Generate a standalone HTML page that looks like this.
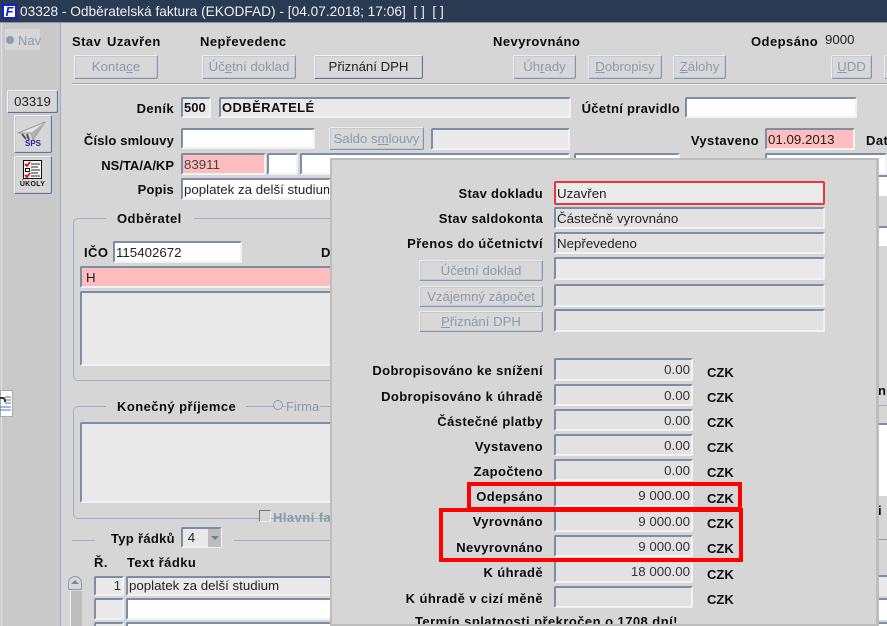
<!DOCTYPE html>
<html><head><meta charset="utf-8"><style>
html,body{margin:0;padding:0}
#p{position:relative;width:887px;height:626px;overflow:hidden;background:#d6d6d6;font:13px/16px "Liberation Sans",sans-serif;color:#111;filter:blur(.25px)}
#p div,#p span.a,#p svg{position:absolute}
.l{font-weight:bold;white-space:nowrap;letter-spacing:.4px;text-align:right;color:#0c0c0c;height:16px;margin-top:1px}
.t{font-weight:bold;white-space:nowrap;letter-spacing:.45px;height:16px;margin-top:1px;color:#0c0c0c}
.f{box-sizing:border-box;border:2px solid;border-color:#7c8da6 #f2f2f2 #f2f2f2 #7c8da6;border-radius:2px;background:#e9e9e9;padding:1px 0 0 1px;white-space:nowrap;overflow:hidden;font-size:13.3px;color:#222}
.w{background:#fff}.pk{background:#ffbdbd}.g{background:#e2e2e2}
.b{box-sizing:border-box;border:1px solid;border-color:#eee #8394ac #8394ac #eee;border-radius:2px;background:#d8d8d8;text-align:center;color:#8c99ad;white-space:nowrap;box-shadow:0 0 0 1px #c4cad3 inset;font-size:13.2px}
.e{color:#222;border-color:#f3f3f3 #5f7595 #5f7595 #f3f3f3}
.v{text-align:right;padding:1px 1px 0 0;color:#333}
.c{font-weight:bold;font-size:13px;color:#0c0c0c;height:16px;margin-top:1px}
.r{border:4px solid #f00;box-sizing:border-box}
u{text-decoration:underline}
</style></head><body><div id="p">

<div style="left:0;top:0;width:887px;height:22px;background:#293a52"></div>
<div style="left:0;top:22px;width:887px;height:1px;background:#8a97a8"></div>
<div style="left:2px;top:4px;width:15px;height:15px;background:#fff;border:2px solid #1420c8;box-sizing:border-box;color:#1420c8;font:italic bold 13px/11px 'Liberation Sans',sans-serif;text-align:center;overflow:hidden">F</div>
<div style="left:20px;top:4px;color:#eef1f5;font-size:13.7px;white-space:nowrap">03328 - Odběratelská faktura (EKODFAD) - [04.07.2018; 17:06]&nbsp; [ ]&nbsp; [ ]</div>

<!-- sidebar -->
<div style="left:0;top:23px;width:60px;height:603px;background:#c9c9c9"></div>
<div style="left:60px;top:23px;width:1px;height:603px;background:#9dabc0"></div>
<div style="left:1px;top:23px;width:1px;height:603px;background:#e4e4e4"></div>
<div style="left:5px;top:29px;width:35px;height:21px;background:#d6d6d6"></div>
<div style="left:5px;top:35px;width:10px;height:10px;border-radius:50%;background:#8e9baf;box-shadow:0 0 0 1px #d9dde3 inset"></div>
<div style="left:18px;top:33px;color:#8c99ad">Nav</div>
<div class="b e" style="left:7px;top:90px;width:51px;height:23px;line-height:21px;background:#d6d6d6">03319</div>
<div class="b e" style="left:14px;top:115px;width:38px;height:38px;background:#d6d6d6"></div>
<svg style="left:17px;top:119px" width="32" height="32" viewBox="0 0 32 32"><path d="M1 14 L28 3 L16 21 L14 14 Z" fill="#e4e4e4" stroke="#8a8a8a" stroke-width=".8"/><path d="M14 14 L28 3 L16 21 Z" fill="#b0b0b0"/><path d="M5 15 L9 20 M10 15 L12 21" stroke="#555" stroke-width="2"/><text x="16" y="27" font-family="Liberation Sans" font-size="8" font-weight="bold" fill="#1a2a9c" text-anchor="middle">SPS</text></svg>
<div class="b e" style="left:14px;top:156px;width:38px;height:38px;background:#d6d6d6"></div>
<svg style="left:18px;top:160px" width="30" height="30" viewBox="0 0 30 30"><rect x="5.5" y=".5" width="18" height="18" fill="#f4f4f4" stroke="#111"/><path d="M7 4l2 2 3-4M7 15l2 2 3-4" stroke="#d00" stroke-width="1.6" fill="none"/><rect x="7.5" y="8.5" width="4" height="3" fill="#fff" stroke="#111"/><path d="M13 4h9M13 7h7M13 10h9M13 13h7M13 16h9" stroke="#333"/><text x="14.5" y="26" font-family="Liberation Sans" font-size="7" font-weight="bold" fill="#111" text-anchor="middle" letter-spacing=".3">ÚKOLY</text></svg>
<div style="left:0;top:390px;width:13px;height:27px;background:#fff;border:1px solid #aaa;box-sizing:border-box"></div>
<svg style="left:0;top:392px" width="12" height="22" viewBox="0 0 12 22"><path d="M5 5h6M5 8h6M5 11h6M0 15h11M0 18h11" stroke="#4a7ab8"/><path d="M0 6h3q2 0 2 4" stroke="#333" stroke-width="2" fill="none"/></svg>

<!-- top row -->
<div class="t" style="left:72px;top:33px">Stav</div>
<div class="t" style="left:107px;top:33px">Uzavřen</div>
<div class="t" style="left:200px;top:33px">Nepřevedenc</div>
<div class="t" style="left:493px;top:33px">Nevyrovnáno</div>
<div class="t" style="left:751px;top:33px">Odepsáno</div>
<div style="left:825px;top:32px;color:#222;font-size:13.3px">9000</div>

<div class="b" style="left:74px;top:55px;width:84px;height:24px;line-height:22px">Konta<u>c</u>e</div>
<div class="b" style="left:202px;top:55px;width:94px;height:24px;line-height:22px">Úč<u>e</u>tní doklad</div>
<div class="b e" style="left:314px;top:55px;width:109px;height:24px;line-height:22px">Přiznání DPH</div>
<div class="b" style="left:513px;top:55px;width:63px;height:24px;line-height:22px">Úh<u>r</u>ady</div>
<div class="b" style="left:588px;top:55px;width:74px;height:24px;line-height:22px"><u>D</u>obropisy</div>
<div class="b" style="left:673px;top:55px;width:53px;height:24px;line-height:22px"><u>Z</u>álohy</div>
<div class="b" style="left:831px;top:55px;width:41px;height:24px;line-height:22px"><u>U</u>DD</div>
<div class="b" style="left:884px;top:55px;width:20px;height:24px"></div>
<div style="left:72px;top:83px;width:815px;height:1px;background:#a6a6a6"></div>
<div style="left:72px;top:84px;width:815px;height:1px;background:#f0f0f0"></div>

<!-- form -->
<div class="l" style="left:100px;width:74px;top:100px">Deník</div>
<div class="f" style="left:181px;top:97px;width:30px;height:21px;font-weight:bold;line-height:16px;color:#111;font-size:13px">500</div>
<div class="f" style="left:219px;top:97px;width:352px;height:21px;font-weight:bold;line-height:16px;color:#111;letter-spacing:.4px;font-size:13px">ODBĚRATELÉ</div>
<div class="l" style="left:560px;width:120px;top:100px;letter-spacing:.3px">Účetní pravidlo</div>
<div class="f w" style="left:685px;top:97px;width:172px;height:21px"></div>

<div class="l" style="left:70px;width:104px;top:132px;letter-spacing:.15px">Číslo smlouvy</div>
<div class="f w" style="left:181px;top:128px;width:134px;height:21px"></div>
<div class="b" style="left:329px;top:127px;width:95px;height:23px;line-height:21px">Saldo s<u>m</u>louvy</div>
<div class="f" style="left:431px;top:128px;width:139px;height:22px"></div>
<div class="l" style="left:680px;width:79px;top:132px">Vystaveno</div>
<div class="f pk" style="left:765px;top:128px;width:90px;height:22px;line-height:17px">01.09.2013</div>
<div class="t" style="left:866px;top:132px">Dat</div>

<div class="l" style="left:70px;width:104px;top:157px;letter-spacing:0">NS/TA/A/KP</div>
<div class="f pk" style="left:181px;top:153px;width:85px;height:22px;line-height:17px;color:#444">83911</div>
<div class="f w" style="left:267px;top:153px;width:31px;height:22px"></div>
<div class="f w" style="left:300px;top:153px;width:270px;height:22px"></div>
<div class="f w" style="left:574px;top:153px;width:106px;height:22px"></div>
<div class="f w" style="left:765px;top:153px;width:122px;height:22px"></div>

<div class="l" style="left:100px;width:74px;top:181px;letter-spacing:.2px">Popis</div>
<div class="f w" style="left:181px;top:178px;width:150px;height:22px;line-height:17px">poplatek za delší studium</div>

<!-- Odberatel -->
<div style="left:73px;top:218px;width:300px;height:163px;box-sizing:border-box;border:1px solid #a3afc1;border-radius:5px"></div>
<div style="left:106px;top:212px;width:88px;height:14px;background:#d6d6d6"></div>
<div class="t" style="left:117px;top:210px">Odběratel</div>
<div class="t" style="left:84px;top:244px">IČO</div>
<div class="f w" style="left:113px;top:241px;width:129px;height:22px;line-height:17px">115402672</div>
<div class="t" style="left:321px;top:244px">D</div>
<div class="f pk" style="left:80px;top:266px;width:260px;height:22px;line-height:17px;padding-left:4px">H</div>
<div class="f" style="left:80px;top:291px;width:260px;height:75px"></div>

<!-- Konecny -->
<div style="left:73px;top:406px;width:300px;height:113px;box-sizing:border-box;border:1px solid #a3afc1;border-radius:5px"></div>
<div style="left:106px;top:400px;width:140px;height:14px;background:#d6d6d6"></div>
<div class="t" style="left:117px;top:398px">Konečný příjemce</div>
<div style="left:273px;top:400px;width:10px;height:10px;border-radius:50%;border:1px solid #8c99ad;background:#d6d6d6;box-sizing:border-box"></div>
<div style="left:286px;top:399px;width:34px;height:16px;background:#d6d6d6;color:#8c99ad">Firma</div>
<div class="f" style="left:80px;top:422px;width:260px;height:81px"></div>
<div style="left:259px;top:510px;width:12px;height:12px;box-sizing:border-box;border:1px solid #777;border-color:#777 #eee #eee #777;background:#d6d6d6"></div>
<div class="t" style="left:273px;top:509px;color:#8c99ad">Hlavní fa</div>

<div style="left:72px;top:540px;width:23px;height:1px;background:#a3afc1"></div>
<div style="left:234px;top:540px;width:100px;height:1px;background:#a3afc1"></div>
<div class="t" style="left:111px;top:530px;letter-spacing:.3px">Typ řádků</div>
<div class="f" style="left:181px;top:527px;width:41px;height:21px;line-height:16px">&nbsp;4</div>
<div style="left:208px;top:529px;width:13px;height:18px;background:#bdbdbd"></div>
<div style="left:211px;top:536px;width:0;height:0;border:4px solid transparent;border-top:4px solid #6d7f99"></div>
<div class="t" style="left:94px;top:554px">Ř.</div>
<div class="t" style="left:127px;top:554px">Text řádku</div>
<div style="left:68px;top:576px;width:14px;height:14px;box-sizing:border-box;border:1px solid #8c99ad;border-radius:7px 7px 2px 2px;background:#d8d8d8"></div>
<div style="left:71px;top:580px;width:0;height:0;border:4px solid transparent;border-bottom:4px solid #7a8aa3;border-top:0"></div>
<div style="left:70px;top:591px;width:11px;height:35px;background:#bdbdbd;border-left:1px solid #eee"></div>
<div class="f v" style="left:94px;top:576px;width:30px;height:20px;line-height:16px;padding-top:0">1</div>
<div class="f" style="left:126px;top:576px;width:220px;height:20px;line-height:16px;padding:0 0 0 1px">poplatek za delší studium</div>
<div class="f" style="left:94px;top:598px;width:30px;height:22px"></div>
<div class="f w" style="left:126px;top:598px;width:220px;height:22px"></div>
<div class="f" style="left:94px;top:622px;width:30px;height:22px"></div>
<div class="f w" style="left:126px;top:622px;width:220px;height:22px"></div>

<!-- right edge -->
<div style="left:878px;top:175px;width:9px;height:21px;background:#fff;border-top:2px solid #7c8da6;box-sizing:border-box"></div>
<div style="left:878px;top:226px;width:9px;height:20px;background:#fff;border-top:2px solid #7c8da6;box-sizing:border-box"></div>
<div class="t" style="left:878px;top:382px">n s</div>
<div style="left:878px;top:405px;width:9px;height:1px;background:#a3afc1"></div>
<div style="left:878px;top:423px;width:9px;height:73px;background:#fff;border-top:2px solid #7c8da6;box-sizing:border-box"></div>
<div class="t" style="left:878px;top:502px">i</div>
<div style="left:878px;top:539px;width:9px;height:1px;background:#999"></div>
<div style="left:878px;top:575px;width:9px;height:21px;background:#e9e9e9;border-top:2px solid #7c8da6;box-sizing:border-box"></div>
<div style="left:878px;top:598px;width:9px;height:22px;background:#fff;border-top:2px solid #7c8da6;box-sizing:border-box"></div>
<div style="left:878px;top:622px;width:9px;height:4px;background:#fff;border-top:2px solid #7c8da6;box-sizing:border-box"></div>

<!-- dialog -->
<div style="left:330px;top:158px;width:549px;height:468px;box-sizing:border-box;background:#d6d6d6;border:2px solid #bdbdbd;border-right:3px solid #bdbdbd;border-bottom:2px solid #bdbdbd;overflow:hidden"></div>

<div class="l" style="left:400px;width:143px;top:185px;letter-spacing:.3px">Stav dokladu</div>
<div class="f" style="left:554px;top:181px;width:271px;height:24px;line-height:19px;border-color:#e23a3a;background:#ebebeb">Uzavřen</div>
<div class="l" style="left:400px;width:143px;top:210px;letter-spacing:.3px">Stav saldokonta</div>
<div class="f g" style="left:554px;top:207px;width:271px;height:22px;line-height:17px">Částečně vyrovnáno</div>
<div class="l" style="left:400px;width:143px;top:235px">Přenos do účetnictví</div>
<div class="f g" style="left:554px;top:232px;width:271px;height:22px;line-height:17px">Nepřevedeno</div>
<div class="b" style="left:419px;top:260px;width:124px;height:21px;line-height:19px">Účetní doklad</div>
<div class="f" style="left:554px;top:257px;width:271px;height:23px"></div>
<div class="b" style="left:419px;top:286px;width:124px;height:21px;line-height:19px">Vzájemný zápočet</div>
<div class="f g" style="left:554px;top:284px;width:271px;height:23px"></div>
<div class="b" style="left:419px;top:311px;width:124px;height:21px;line-height:19px"><u>P</u>řiznání DPH</div>
<div class="f g" style="left:554px;top:309px;width:271px;height:23px"></div>

<div class="l" style="left:340px;width:203px;top:362px">Dobropisováno ke snížení</div>
<div class="f g v" style="left:554px;top:358px;width:139px;height:23px;line-height:18px">0.00</div>
<div class="c" style="left:707px;top:364px">CZK</div>
<div class="l" style="left:340px;width:203px;top:388px">Dobropisováno k úhradě</div>
<div class="f g v" style="left:554px;top:384px;width:139px;height:22px;line-height:17px">0.00</div>
<div class="c" style="left:707px;top:389px">CZK</div>
<div class="l" style="left:340px;width:203px;top:413px">Částečné platby</div>
<div class="f g v" style="left:554px;top:409px;width:139px;height:22px;line-height:17px">0.00</div>
<div class="c" style="left:707px;top:414px">CZK</div>
<div class="l" style="left:340px;width:203px;top:438px">Vystaveno</div>
<div class="f g v" style="left:554px;top:434px;width:139px;height:22px;line-height:17px">0.00</div>
<div class="c" style="left:707px;top:439px">CZK</div>
<div class="l" style="left:340px;width:203px;top:463px">Započteno</div>
<div class="f g v" style="left:554px;top:459px;width:139px;height:22px;line-height:17px">0.00</div>
<div class="c" style="left:707px;top:464px">CZK</div>
<div class="l" style="left:340px;width:203px;top:488px">Odepsáno</div>
<div class="f g v" style="left:554px;top:484px;width:139px;height:23px;line-height:18px">9 000.00</div>
<div class="c" style="left:707px;top:490px">CZK</div>
<div class="l" style="left:340px;width:203px;top:513px">Vyrovnáno</div>
<div class="f g v" style="left:554px;top:510px;width:139px;height:22px;line-height:17px">9 000.00</div>
<div class="c" style="left:707px;top:515px">CZK</div>
<div class="l" style="left:340px;width:203px;top:539px">Nevyrovnáno</div>
<div class="f g v" style="left:554px;top:535px;width:139px;height:22px;line-height:17px">9 000.00</div>
<div class="c" style="left:707px;top:540px">CZK</div>
<div class="l" style="left:340px;width:203px;top:564px">K úhradě</div>
<div class="f g v" style="left:554px;top:560px;width:139px;height:23px;line-height:18px">18 000.00</div>
<div class="c" style="left:707px;top:566px">CZK</div>
<div class="l" style="left:340px;width:203px;top:590px">K úhradě v cizí měně</div>
<div class="f g v" style="left:554px;top:586px;width:139px;height:22px"></div>
<div class="c" style="left:707px;top:591px">CZK</div>
<div style="left:332px;top:612px;width:544px;height:12px;overflow:hidden"><div class="t" style="left:83px;top:1px">Termín splatnosti překročen o 1708 dní!</div></div>

<div class="r" style="left:467px;top:482px;width:275px;height:29px"></div>
<div class="r" style="left:439px;top:508px;width:304px;height:54px"></div>
</div></body></html>
